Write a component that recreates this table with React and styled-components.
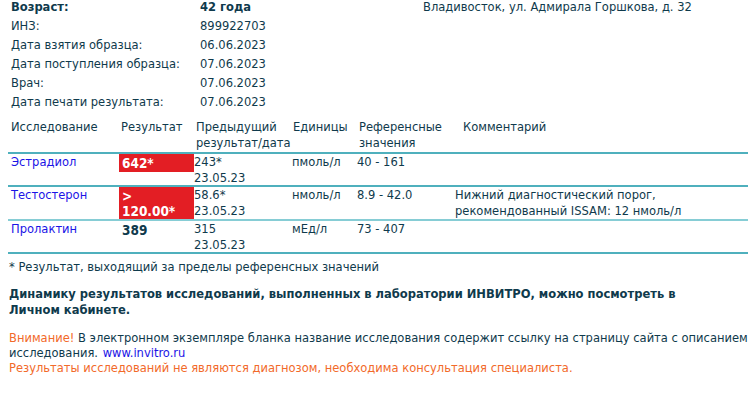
import React from "react";
import styled, { createGlobalStyle } from "styled-components";

const Global = createGlobalStyle`
  html, body { margin: 0; padding: 0; background: #fff; }
  body {
    font-family: "DejaVu Sans Condensed", "DejaVu Sans", sans-serif;
    font-size: 12.8px;
    color: #0f3a4c;
  }
`;

const Page = styled.div`
  width: 754px;
  height: 398px;
  overflow: hidden;
  padding: 0 0 0 8px;
  box-sizing: border-box;
`;

const Header = styled.div`
  display: flex;
  margin-top: -3px;
`;

const InfoGrid = styled.div`
  display: grid;
  grid-template-columns: 189px 223px;
  grid-auto-rows: 19px;
  align-items: center;
  padding-left: 3px;
`;

const InfoCell = styled.div`
  font-weight: ${(p) => (p.$bold ? "bold" : "normal")};
  white-space: nowrap;
`;

const Address = styled.div`
  line-height: 19px;
  white-space: nowrap;
`;

const Table = styled.div`
  width: 740px;
  margin-top: 8px;
  display: grid;
  grid-template-columns: 111px 75px 98px 64px 96px 1fr;
`;

const HeadCell = styled.div`
  padding: 0 0 1px ${(p) => p.$pl ?? 3}px;
  line-height: 16px;
  border-bottom: 2px solid #4fb0bd;
`;

const Cell = styled.div`
  padding: 0 0 0 ${(p) => p.$pl ?? 2}px;
  line-height: 15.5px;
  min-height: 31px;
  border-bottom: ${(p) => (p.$thick ? "2px solid #86cdd5" : "2px solid #4fb0bd")};
`;

const Link = styled.a`
  color: #1b14e6;
  text-decoration: none;
  padding-left: 1px;
`;

const ResultCell = styled.div`
  border-bottom: ${(p) => (p.$thick ? "2px solid #86cdd5" : "2px solid #4fb0bd")};
  min-height: 31px;
`;

const Result = styled.div`
  font-weight: bold;
  line-height: 14.5px;
  padding: 2px 3px 1px;
  background: ${(p) => (p.$flag ? "#e31e24" : "transparent")};
  color: ${(p) => (p.$flag ? "#fff" : "#0f3a4c")};
  font-size: 13.5px;
`;

const Footnote = styled.div`
  margin-top: 5px;
  padding-left: 1px;
  line-height: 16px;
`;

const Bold = styled.div`
  margin-top: 11px;
  padding-left: 1px;
  font-weight: bold;
  line-height: 16px;
  width: 720px;
`;

const Notice = styled.div`
  margin-top: 12px;
  padding-left: 1px;
  line-height: 15px;
  width: 744px;
`;

const Orange = styled.span`
  color: #f26a2a;
`;

const rows = [
  {
    name: "Эстрадиол",
    result: ["642*"],
    flag: true,
    prev: ["243*", "23.05.23"],
    unit: "пмоль/л",
    ref: "40 - 161",
    comment: "",
  },
  {
    name: "Тестостерон",
    result: [">", "120.00*"],
    flag: true,
    prev: ["58.6*", "23.05.23"],
    unit: "нмоль/л",
    ref: "8.9 - 42.0",
    comment: ["Нижний диагностический порог,", "рекомендованный ISSAM: 12 нмоль/л"],
  },
  {
    name: "Пролактин",
    result: ["389"],
    flag: false,
    prev: ["315", "23.05.23"],
    unit: "мЕд/л",
    ref: "73 - 407",
    comment: "",
  },
];

const info = [
  ["Возраст:", "42 года", true],
  ["ИНЗ:", "899922703"],
  ["Дата взятия образца:", "06.06.2023"],
  ["Дата поступления образца:", "07.06.2023"],
  ["Врач:", "07.06.2023"],
  ["Дата печати результата:", "07.06.2023"],
];

const Lines = ({ items }) =>
  (Array.isArray(items) ? items : [items]).map((t, i) => <div key={i}>{t}</div>);

export default function App() {
  return (
    <>
      <Global />
      <Page>
        <Header>
          <InfoGrid>
            {info.map(([l, v, b]) => (
              <React.Fragment key={l}>
                <InfoCell $bold={b}>{l}</InfoCell>
                <InfoCell $bold={b}>{v}</InfoCell>
              </React.Fragment>
            ))}
          </InfoGrid>
          <Address>Владивосток, ул. Адмирала Горшкова, д. 32</Address>
        </Header>
        <Table>
          <HeadCell>Исследование</HeadCell>
          <HeadCell $pl={2}>Результат</HeadCell>
          <HeadCell $pl={2}>
            Предыдущий
            <br />
            результат/дата
          </HeadCell>
          <HeadCell $pl={1}>Единицы</HeadCell>
          <HeadCell $pl={3}>
            Референсные
            <br />
            значения
          </HeadCell>
          <HeadCell $pl={11}>Комментарий</HeadCell>
          {rows.map((r, i) => {
            const thick = i === 1;
            return (
              <React.Fragment key={r.name}>
                <Cell $thick={thick}>
                  <Link href="#">{r.name}</Link>
                </Cell>
                <ResultCell $thick={thick}>
                  <Result $flag={r.flag}>
                    <Lines items={r.result} />
                  </Result>
                </ResultCell>
                <Cell $thick={thick} $pl={0}>
                  <Lines items={r.prev} />
                </Cell>
                <Cell $thick={thick} $pl={0}>{r.unit}</Cell>
                <Cell $thick={thick} $pl={1}>{r.ref}</Cell>
                <Cell $thick={thick} $pl={3}>
                  <Lines items={r.comment} />
                </Cell>
              </React.Fragment>
            );
          })}
        </Table>
        <Footnote>* Результат, выходящий за пределы референсных значений</Footnote>
        <Bold>
          Динамику результатов исследований, выполненных в лаборатории ИНВИТРО, можно посмотреть в
          Личном кабинете.
        </Bold>
        <Notice>
          <Orange>Внимание!</Orange> В электронном экземпляре бланка название исследования содержит
          ссылку на страницу сайта с описанием исследования. <Link href="#">www.invitro.ru</Link>
          <br />
          <Orange>Результаты исследований не являются диагнозом, необходима консультация специалиста.</Orange>
        </Notice>
      </Page>
    </>
  );
}
